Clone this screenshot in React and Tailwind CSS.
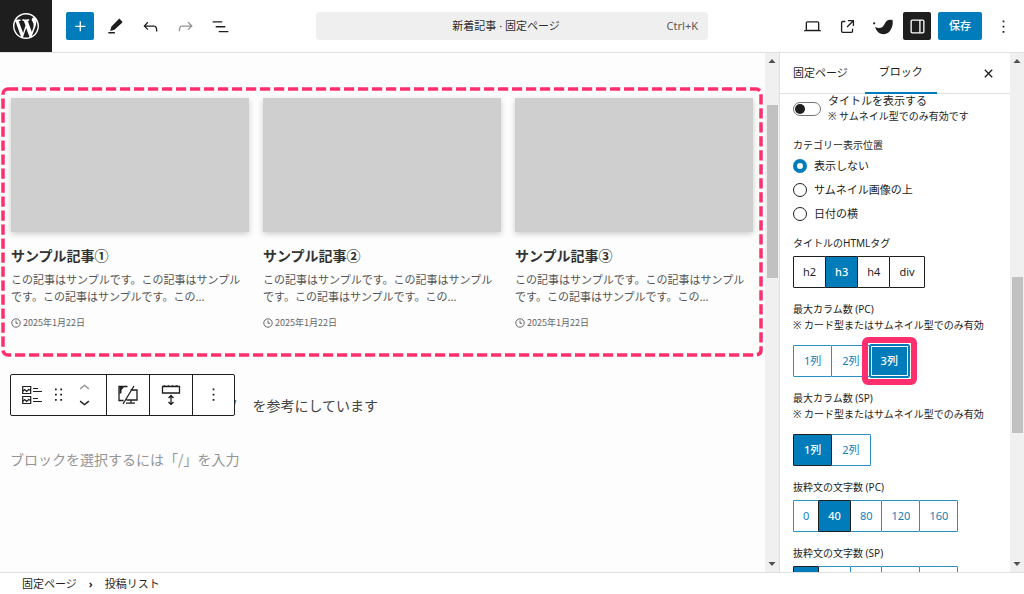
const paths = {
    wordpress:
        "M20 10c0-5.51-4.49-10-10-10C4.48 0 0 4.49 0 10c0 5.52 4.48 10 10 10 5.51 0 10-4.48 10-10zM7.78 15.37L4.37 6.22c.55-.02 1.17-.08 1.17-.08.5-.06.44-1.13-.06-1.11 0 0-1.45.11-2.37.11-.18 0-.37 0-.58-.01C4.12 2.69 6.87 1.11 10 1.11c2.33 0 4.45.87 6.05 2.34-.68-.11-1.65.39-1.65 1.58 0 .74.45 1.36.9 2.1.35.61.55 1.36.55 2.46 0 1.49-1.4 5-1.4 5l-3.03-8.37c.54-.02.82-.17.82-.17.5-.05.44-1.25-.06-1.22 0 0-1.44.12-2.38.12-.87 0-2.33-.12-2.33-.12-.5-.03-.56 1.2-.06 1.22l.92.08 1.26 3.41zM17.41 10c.24-.64.74-1.87.43-4.25.7 1.29 1.05 2.71 1.05 4.25 0 3.29-1.73 6.24-4.4 7.78.97-2.59 1.94-5.2 2.92-7.78zM6.1 18.09C3.12 16.65 1.11 13.53 1.11 10c0-1.3.23-2.48.72-3.59C3.25 10.3 4.67 14.2 6.1 18.09zm4.03-6.63l2.58 6.98c-.86.29-1.76.45-2.71.45-.79 0-1.57-.11-2.29-.33.81-2.38 1.62-4.74 2.42-7.1z",
    plus: "M11 12.5V17.5H12.5V12.5H17.5V11H12.5V6H11V11H6V12.5H11Z",
    edit: "M19.600 6.200 17.200 3.600c-.5-.5-1.200-.5-1.700 0L7.200 12.200 5.900 17l4.900-1.200 8.800-8.100c.4-.4.4-1.100 0-1.500ZM3.800 18.300h7.500v1.700H3.800v-1.700Z",
    undo: "M18.3 11.7c-.6-.6-1.4-.9-2.3-.9H6.7l2.9-3.3-1.1-1-4.5 5L8.5 16l1-1-2.7-2.7H16c.5 0 .9.2 1.3.5 1 1 1 3.4 1 4.5v.3h1.5v-.2c0-1.5 0-4.3-1.5-5.7z",
    redo: "M15.6 6.5l-1.1 1 2.9 3.3H8c-.9 0-1.7.3-2.3.9-1.4 1.5-1.4 4.2-1.4 5.6v.2h1.5v-.3c0-1.1 0-3.5 1-4.5.3-.3.7-.5 1.3-.5h9.2L14.5 15l1.1 1.1 4.6-4.6-4.6-5z",
    list: "M3 6h11v1.5H3V6Zm3.5 5.5h11V13h-11v-1.5ZM21 17H10v1.5h11V17Z",
    desktop:
        "M20.5 16h-.7V8c0-1.1-.9-2-2-2H6.2c-1.1 0-2 .9-2 2v8h-.7c-.8 0-1.5.7-1.5 1.5h20c0-.8-.7-1.5-1.5-1.5zM5.7 8c0-.3.2-.5.5-.5h11.6c.3 0 .5.2.5.5v7.6H5.7V8z",
    external:
        "M19.5 4.5h-7V6h4.44l-5.97 5.97 1.06 1.06L18 7.06v4.44h1.5v-7Zm-13 1a2 2 0 0 0-2 2v10a2 2 0 0 0 2 2h10a2 2 0 0 0 2-2v-3H17v3a.5.5 0 0 1-.5.5h-10a.5.5 0 0 1-.5-.5v-10a.5.5 0 0 1 .5-.5h3V5.5h-3Z",
    bird: "M3.500 12.500c3 1.500 6.500 1.500 8.500 0 2.200-1.700 2.500-5 5-7 1.800-1.500 4-1.600 6.500-.8.800 4.500-.3 9.500-3.500 13-4.500 4.800-13.500 4.500-16.500-5.200ZM2.500 7a1.300 1.300 0 1 1 0 2.600 1.300 1.300 0 0 1 0-2.600Z",
    drawer: "M18 4H6c-1.1 0-2 .9-2 2v12c0 1.1.9 2 2 2h12c1.1 0 2-.9 2-2V6c0-1.1-.9-2-2-2zm-4 14.5H6c-.3 0-.5-.2-.5-.5V6c0-.3.2-.5.5-.5h8v13zm4.5-.5c0 .3-.2.5-.5.5h-2.500v-13H18c.3 0 .5.2.5.5v12z",
    more: "M13 19h-2v-2h2v2zm0-6h-2v-2h2v2zm0-6h-2V5h2v2z",
    close: "M12 13.06l3.712 3.713 1.061-1.06L13.061 12l3.712-3.712-1.06-1.06L12 10.938 8.288 7.227l-1.061 1.06L10.939 12l-3.712 3.712 1.06 1.061L12 13.061z",
    up: "M6.5 12.4L12 8l5.5 4.4-.9 1.2L12 10l-4.500 3.600-1-1.200z",
    down: "M17.5 11.600L12 16l-5.500-4.400.9-1.200L12 14l4.500-3.600 1 1.200z",
    drag: "M8 7h2V5H8v2zm0 6h2v-2H8v2zm0 6h2v-2H8v2zm6-14v2h2V5h-2zm0 8h2v-2h-2v2zm0 6h2v-2h-2v2z",
};

function Icon({ name, box = "0 0 24 24", className = "size-[21px]" }) {
    return (
        <svg viewBox={box} fill="currentColor" className={`shrink-0 overflow-visible ${className}`} aria-hidden="true">
            <path d={paths[name]} />
        </svg>
    );
}

function IconButton({ name, label, className = "" }) {
    return (
        <button aria-label={label} className={`flex size-7 shrink-0 items-center justify-center rounded-xs ${className}`}>
            <Icon name={name} />
        </button>
    );
}

function Header() {
    return (
        <header className="flex h-[53px] shrink-0 items-center border-b border-[#e0e0e0] bg-white">
            <div className="flex flex-1 items-center gap-[7px]">
                <a href="#" aria-label="WordPress" className="mr-[7px] flex size-[52px] items-center justify-center bg-[#1e1e1e] text-white">
                    <Icon name="wordpress" box="0 0 20 20" className="size-[26px]" />
                </a>
                <IconButton name="plus" label="ブロック挿入ツール" className="bg-[#007cba] text-white" />
                <IconButton name="edit" label="ツール" />
                <IconButton name="undo" label="元に戻す" />
                <IconButton name="redo" label="やり直す" className="text-[#949494]" />
                <IconButton name="list" label="ドキュメント概観" />
            </div>
            <button className="flex h-7 w-[392px] items-center rounded bg-[#efefef] px-2.5 text-[#2f2f2f]">
                <span className="w-6" />
                <span className="flex-1 text-center">新着記事 · 固定ページ</span>
                <span className="w-9 text-right text-[#5a5a5a]">Ctrl+K</span>
            </button>
            <div className="flex flex-1 items-center justify-end gap-[7px]">
                <IconButton name="desktop" label="表示" />
                <IconButton name="external" label="固定ページを表示" />
                <IconButton name="bird" label="テーマ設定" />
                <IconButton name="drawer" label="設定" className="bg-[#1e1e1e] text-white" />
                <button className="h-7 w-11 rounded-xs bg-[#007cba] font-medium text-white">保存</button>
                <IconButton name="more" label="オプション" className="mr-[7px]" />
            </div>
        </header>
    );
}

function Scrollbar({ before, thumb, after }) {
    return (
        <div className="flex w-3.5 shrink-0 flex-col items-center bg-[#f0f0f0]" aria-hidden="true">
            <svg viewBox="0 0 14 16" className="h-4 w-3.5 shrink-0" fill="#505050">
                <path d="M7 6 10.500 10h-7Z" />
            </svg>
            <div className={before} />
            <div className={`w-[11px] bg-[#c1c1c1] ${thumb}`} />
            <div className={after} />
            <svg viewBox="0 0 14 16" className="h-4 w-3.5 shrink-0" fill="#505050">
                <path d="M7 10 10.500 6h-7Z" />
            </svg>
        </div>
    );
}

function PostCard({ title }) {
    return (
        <article className="min-w-0">
            <div className="aspect-video bg-[#cfcfcf] shadow-[0_2px_6px_rgba(0,0,0,0.2)]" />
            <h3 className="mt-[13px] text-sm leading-5 font-bold text-[#333]">{title}</h3>
            <p className="mt-1.5 text-[11px] leading-[17px] text-[#555]">
                この記事はサンプルです。この記事はサンプルです。この記事はサンプルです。この...
            </p>
            <p className="mt-2.5 flex items-center gap-0.5 text-[9px] leading-4 text-[#666]">
                <svg viewBox="0 0 10 10" className="size-2.5" fill="none" stroke="currentColor" aria-hidden="true">
                    <circle cx="5" cy="5" r="4.200" />
                    <path d="M5 2.500V5.300H7" />
                </svg>
                <time dateTime="2025-01-22">2025年1月22日</time>
            </p>
        </article>
    );
}

function BlockToolbar() {
    return (
        <div className="relative z-10 flex h-[42px] shrink-0 divide-x divide-[#1e1e1e] rounded-xs border border-[#1e1e1e] bg-white">
            <div className="flex w-24 items-center pl-[11px]">
                <button aria-label="投稿リスト">
                    <svg viewBox="0 0 20 20" className="size-5" fill="none" stroke="#1e1e1e" strokeWidth="1.200" aria-hidden="true">
                        <path d="M.7 1.500h8v7h-8ZM.7 11.500h8v7h-8ZM.7 6.500l2-2 2 2 2-2 2 1M.7 16.500l2-2 2 2 2-2 2 1M11 3.500h5M11 6.500h9M11 13.500h5M11 16.500h9" />
                    </svg>
                </button>
                <button aria-label="ドラッグ" className="ml-1.5">
                    <Icon name="drag" />
                </button>
                <div className="ml-[5px] flex flex-col">
                    <button aria-label="上に移動" className="h-3.5 text-[#949494]">
                        <Icon name="up" box="0 4 24 16" className="h-3.5 w-[21px]" />
                    </button>
                    <button aria-label="下に移動" className="h-3.5">
                        <Icon name="down" box="0 4 24 16" className="h-3.5 w-[21px]" />
                    </button>
                </div>
            </div>
            <button aria-label="表示デバイス" className="flex w-[43px] items-center justify-center">
                <svg viewBox="0 0 20 20" className="size-5" fill="none" stroke="#1e1e1e" strokeWidth="1.300" aria-hidden="true">
                    <path d="M9.500 1.500H1v14h4.500M12.500 5H19v10H8.500M16 1 5 19M8 18.200h9M13 15v3" />
                    <path d="M1.500 2h4.500l-2.500 3v3l-2 1Z" fill="#1e1e1e" stroke="none" />
                </svg>
            </button>
            <button aria-label="余白" className="flex w-[43px] items-center justify-center">
                <svg viewBox="0 0 20 20" className="size-5" fill="none" stroke="#1e1e1e" strokeWidth="1.300" aria-hidden="true">
                    <path d="M1.500 1.500h17v6.500h-17ZM10 11v8M7.500 13 10 10.500l2.500 2.500M7.500 17l2.500 2.500 2.500-2.500" />
                    <path d="M2.500.8h15" strokeDasharray="2 2" />
                </svg>
            </button>
            <button aria-label="オプション" className="flex w-[41px] items-center justify-center">
                <Icon name="more" />
            </button>
        </div>
    );
}

function Canvas() {
    return (
        <div className="min-w-0 flex-1 overflow-hidden bg-[#fdfdfd] font-['Noto_Sans_CJK_JP',sans-serif]">
            <section className="relative mt-[34px] mr-0.5 ml-px px-2.5 pt-[11px] pb-[26px]">
                <svg className="absolute inset-0 size-full overflow-visible p-0.5" fill="none" aria-hidden="true">
                    <rect width="100%" height="100%" rx="5" stroke="#ff2e6c" strokeWidth="3.500" strokeDasharray="10.200 3.800" />
                </svg>
                <div className="grid grid-cols-3 gap-3.5">
                    <PostCard title="サンプル記事①" />
                    <PostCard title="サンプル記事②" />
                    <PostCard title="サンプル記事③" />
                </div>
            </section>
            <div className="mt-[17px] flex items-center px-2.5">
                <BlockToolbar />
                <p className="pt-5 text-sm leading-5 text-[#444]">
                    <span className="-ml-1">/</span>
                    <span className="ml-4">を参考にしています</span>
                </p>
            </div>
            <input
                aria-label="ブロックを追加"
                placeholder="ブロックを選択するには「/」を入力"
                className="mt-[31px] ml-2.5 h-6 w-72 text-sm placeholder:text-[#949494]"
            />
        </div>
    );
}

function Choices({ label, help, options, value, dark, marked }) {
    return (
        <fieldset>
            <legend className="text-[10px] leading-4">{label}</legend>
            {help && <p className="mb-1.5 text-[10px] leading-[17px] whitespace-nowrap">{help}</p>}
            <div className="flex pt-[5px]">
                {options.map((o) => {
                    const on = o === value;
                    let tone = "border-[#2a8fc6] bg-white text-[#1180bb]";
                    if (dark) tone = "border-[#1e1e1e] bg-white";
                    if (on) tone = "z-10 border-[#1e1e1e] bg-[#007cba] font-medium text-white";
                    if (on && marked) tone = "border-[#007cba] bg-[#007cba] font-medium text-white outline outline-[#007cba] inset-ring inset-ring-white";
                    return (
                        <div key={o} className={`relative -mr-px ${on ? "z-10" : ""}`}>
                            <button aria-pressed={on} className={`h-8 rounded-[1px] border ${help ? "px-2.5" : "px-[9px]"} ${tone}`}>
                                {o}
                            </button>
                            {on && marked && <span className="pointer-events-none absolute -inset-2 rounded-md border-6 border-[#ff2e6c]" />}
                        </div>
                    );
                })}
            </div>
        </fieldset>
    );
}

function Sidebar() {
    const positions = ["表示しない", "サムネイル画像の上", "日付の横"];
    return (
        <aside className="flex w-[231px] shrink-0 flex-col border-l border-[#e0e0e0] bg-white">
            <div className="flex h-[41px] shrink-0 items-stretch border-b border-[#e0e0e0]">
                <button className="px-[13px]">固定ページ</button>
                <button className="ml-1 -mb-px border-b-2 border-[#007cba] px-3.5">ブロック</button>
                <button aria-label="設定を閉じる" className="mr-[11px] ml-auto">
                    <Icon name="close" />
                </button>
            </div>
            <div className="flex min-h-0 flex-1 flex-col gap-[13px] overflow-hidden px-[13px]">
                <label className="flex items-start gap-[7px]">
                    <input type="checkbox" role="switch" className="peer sr-only" />
                    <span className="mt-2 flex h-3.5 w-7 items-center rounded-full border border-[#757575] p-px">
                        <span className="size-2.5 rounded-full bg-[#1e1e1e]" />
                    </span>
                    <span>
                        <span className="block leading-[14px]">タイトルを表示する</span>
                        <span className="block text-[10px] leading-4">※ サムネイル型でのみ有効です</span>
                    </span>
                </label>
                <fieldset className="-mb-1">
                    <legend className="mb-px text-[10px] leading-4">カテゴリー表示位置</legend>
                    {positions.map((p, i) => (
                        <label key={p} className="flex h-6 items-center gap-[7px]">
                            <input
                                type="radio"
                                name="category"
                                defaultChecked={i === 0}
                                className="size-3.5 appearance-none rounded-full border border-[#1e1e1e] checked:border-4 checked:border-[#007cba]"
                            />
                            {p}
                        </label>
                    ))}
                </fieldset>
                <Choices label="タイトルのHTMLタグ" options={["h2", "h3", "h4", "div"]} value="h3" dark />
                <Choices
                    label="最大カラム数 (PC)"
                    help="※ カード型またはサムネイル型でのみ有効"
                    options={["1列", "2列", "3列"]}
                    value="3列"
                    marked
                />
                <Choices
                    label="最大カラム数 (SP)"
                    help="※ カード型またはサムネイル型でのみ有効"
                    options={["1列", "2列"]}
                    value="1列"
                />
                <Choices label="抜粋文の文字数 (PC)" options={["0", "40", "80", "120", "160"]} value="40" />
                <Choices label="抜粋文の文字数 (SP)" options={["0", "40", "80", "120", "160"]} value="0" />
            </div>
        </aside>
    );
}

export default function App() {
    return (
        <div className="flex h-screen flex-col overflow-hidden bg-white font-['Noto_Sans','Noto_Sans_CJK_JP',sans-serif] text-[11px] text-[#1e1e1e]">
            <Header />
            <main className="flex min-h-0 flex-1">
                <Canvas />
                <Scrollbar before="grow-36" thumb="grow-173" after="grow-278" />
                <Sidebar />
                <Scrollbar before="grow-208" thumb="grow-156" after="grow-123" />
            </main>
            <footer className="flex h-[22px] shrink-0 items-center gap-3 border-t border-[#e0e0e0] px-[22px] pt-0.5">
                <a href="#">固定ページ</a>
                <span className="font-bold">›</span>
                <a href="#">投稿リスト</a>
            </footer>
        </div>
    );
}
